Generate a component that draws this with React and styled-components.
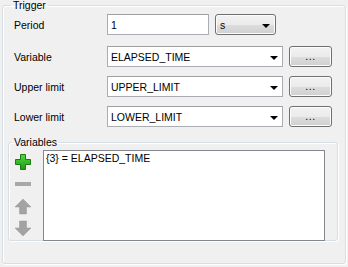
import React from "react";
import styled, { createGlobalStyle } from "styled-components";

const Global = createGlobalStyle`
  html, body {
    margin: 0;
    padding: 0;
    background: #f0f0f0;
  }
  body {
    font-family: "Liberation Sans", Arial, sans-serif;
    font-size: 10.5px;
    color: #000;
  }
`;

const Page = styled.div`
  width: 348px;
  height: 267px;
  padding: 0 2px 3px 2px;
  box-sizing: border-box;
`;

const Group = styled.fieldset`
  margin: 0;
  padding: ${(p) => p.$pad || "0"};
  border: 1px solid #d5dfe5;
  border-radius: 3px;
  box-shadow: inset 1px 1px 0 #fff, 1px 1px 0 #fff;
  box-sizing: border-box;
  height: ${(p) => p.$h || "auto"};
  min-width: 0;
`;

const Legend = styled.legend`
  padding: 0 2px;
  margin-left: 3px;
  line-height: 10px;
`;

const Form = styled.div`
  display: grid;
  grid-template-columns: 93px auto;
  row-gap: 9px;
  padding: 4px 0 0 6px;
`;

const Label = styled.div`
  display: flex;
  align-items: center;
  height: 21px;
  margin-top: ${(p) => p.$mt || "0"};
`;

const Fields = styled.div`
  display: flex;
  gap: 6px;
  margin-top: ${(p) => p.$mt || "0"};
`;

const TextBox = styled.div`
  width: ${(p) => p.$w}px;
  height: 21px;
  box-sizing: border-box;
  background: #fff;
  border: 1px solid #abadb3;
  border-top-color: #a0a0a0;
  display: flex;
  align-items: center;
  padding-left: 3px;
`;

const Combo = styled(TextBox)`
  justify-content: space-between;
  padding-right: 4px;
`;

const Arrow = styled.span`
  width: 0;
  height: 0;
  border-left: 4px solid transparent;
  border-right: 4px solid transparent;
  border-top: 4px solid #000;
  margin-top: 2px;
`;

const ButtonLike = styled.div`
  width: ${(p) => p.$w}px;
  height: 21px;
  box-sizing: border-box;
  border: 1px solid #707070;
  border-radius: 3px;
  background: linear-gradient(#f2f2f2 0%, #ebebeb 50%, #dddddd 51%, #cfcfcf 100%);
  box-shadow: inset 0 0 0 1px #fcfcfc;
  display: flex;
  align-items: center;
`;

const DropButton = styled(ButtonLike)`
  justify-content: space-between;
  padding: 0 5px 0 4px;
`;

const DotsButton = styled(ButtonLike)`
  justify-content: center;
  letter-spacing: 0.5px;
  padding-bottom: 2px;
`;

const Inner = styled.div`
  margin-top: 10px;
  padding-right: 3px;
`;

const VarBody = styled.div`
  display: flex;
  gap: 11px;
  padding: 3px 12px 2px 5px;
`;

const Tools = styled.div`
  display: flex;
  flex-direction: column;
  width: 18px;
  padding-top: 2px;
  gap: 2px;
`;

const Tool = styled.div`
  height: 20px;
  display: flex;
  align-items: center;
  justify-content: center;
`;

const List = styled.div`
  flex: 1;
  height: 91px;
  box-sizing: border-box;
  background: #fff;
  border: 1px solid #828790;
  padding: 1px 2px;
`;

const Plus = () => (
  <svg width="18" height="18" viewBox="0 0 18 18">
    <defs>
      <linearGradient id="pg" x1="0" y1="0" x2="0" y2="1">
        <stop offset="0" stopColor="#52d83e" />
        <stop offset="1" stopColor="#1e9a18" />
      </linearGradient>
    </defs>
    <path
      d="M6.5 1.5h5v5h5v5h-5v5h-5v-5h-5v-5h5z"
      fill="url(#pg)"
      stroke="#1a7a14"
      strokeWidth="1"
    />
  </svg>
);

const Minus = () => (
  <svg width="18" height="6" viewBox="0 0 18 6">
    <rect x="1" y="1" width="16" height="4" fill="#a8a8a8" />
  </svg>
);

const Up = () => (
  <svg width="18" height="17" viewBox="0 0 18 17">
    <path d="M9 1L17 9h-4.5v7h-7V9H1z" fill="#a3a3a3" stroke="#999" strokeWidth="0.5" />
  </svg>
);

const Down = () => (
  <svg width="18" height="17" viewBox="0 0 18 17">
    <path d="M9 16L17 8h-4.5V1h-7v7H1z" fill="#a3a3a3" stroke="#999" strokeWidth="0.5" />
  </svg>
);

const rows = [
  { label: "Variable", value: "ELAPSED_TIME" },
  { label: "Upper limit", value: "UPPER_LIMIT" },
  { label: "Lower limit", value: "LOWER_LIMIT" },
];

export default function App() {
  return (
    <Page>
      <Global />
      <Group $h="264px" $pad="0 4px 0 5px">
        <Legend>Trigger</Legend>
        <Form>
          <Label>Period</Label>
          <Fields>
            <TextBox $w={102}>1</TextBox>
            <DropButton $w={61}>
              <span>s</span>
              <Arrow />
            </DropButton>
          </Fields>
          {rows.map((r, i) => (
            <React.Fragment key={r.label}>
              <Label $mt={i === 0 ? "2px" : "0"}>{r.label}</Label>
              <Fields $mt={i === 0 ? "2px" : "0"}>
                <Combo $w={176}>
                  <span>{r.value}</span>
                  <Arrow />
                </Combo>
                <DotsButton $w={43}>...</DotsButton>
              </Fields>
            </React.Fragment>
          ))}
        </Form>
        <Inner>
          <Group $h="104px">
            <Legend>Variables</Legend>
            <VarBody>
              <Tools>
                <Tool><Plus /></Tool>
                <Tool><Minus /></Tool>
                <Tool><Up /></Tool>
                <Tool><Down /></Tool>
              </Tools>
              <List>{"{3} = ELAPSED_TIME"}</List>
            </VarBody>
          </Group>
        </Inner>
      </Group>
    </Page>
  );
}
